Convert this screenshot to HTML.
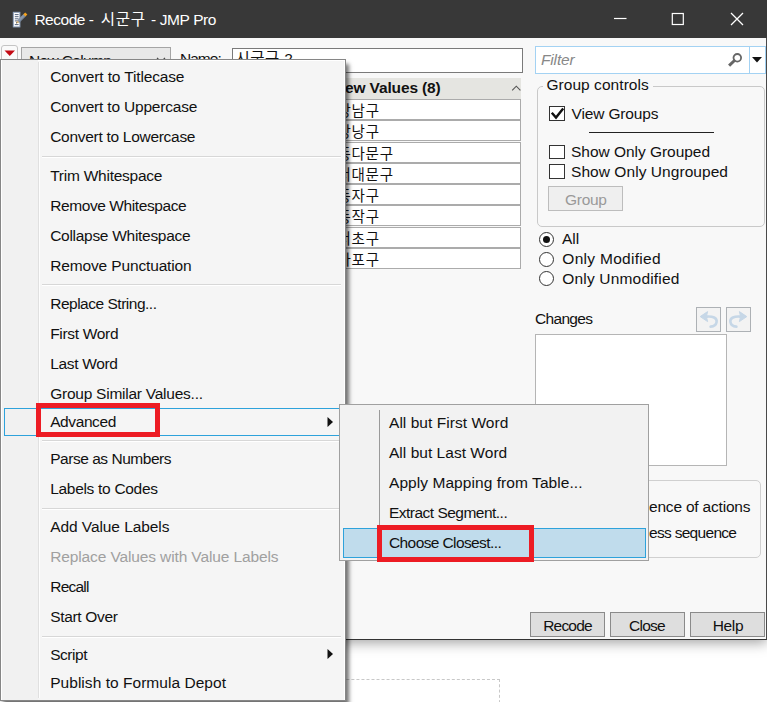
<!DOCTYPE html>
<html><head><meta charset="utf-8"><title>Recode</title>
<style>
html,body{margin:0;padding:0;}
body{width:767px;height:702px;position:relative;overflow:hidden;background:#fff;font-family:"Liberation Sans","Noto Sans CJK KR",sans-serif;color:#111;}
.a{position:absolute;box-sizing:border-box;}
.t{position:absolute;white-space:pre;line-height:24px;height:24px;}
.fld{position:absolute;box-sizing:border-box;background:#fff;border:1px solid #ababab;}
.btn{position:absolute;box-sizing:border-box;background:#dedede;border:1px solid #8a8a8a;}
.sep{position:absolute;height:2px;box-sizing:border-box;background:#fff;border-top:1px solid #d7d7d7;}
</style></head><body>
<!-- page background below the window -->
<div class="a" style="left:0;top:679px;width:500px;height:40px;border:1px dashed #c8c8c8;border-left:none;"></div>
<!-- window shadow -->
<div class="a" style="left:0;top:0;width:767px;height:640px;box-shadow:0 3px 12px rgba(0,0,0,.36);background:#f8f8f8;border-right:1px solid #4a4a4a;border-bottom:1px solid #333;"></div>
<!-- title bar -->
<div class="a" style="left:0;top:0;width:767px;height:38px;background:#383838;"></div>
<svg class="a" style="left:10px;top:8px" width="22" height="22" viewBox="10 8 22 22">
  <rect x="13.3" y="12.3" width="6.6" height="14.6" fill="#fff" stroke="#8fa3bf" stroke-width="1"/>
  <path d="M14.8 14.6h3.8M14.8 16.7h3.8M14.8 18.8h3.8M14.8 20.9h2.6M14.8 24.6h3.8" stroke="#56657e" stroke-width="1"/>
  <path d="M18 21.6 L24.6 15.2" stroke="#8796aa" stroke-width="3"/>
  <path d="M18.9 22.5 L25.4 16.2" stroke="#6d7c90" stroke-width="0.9"/>
  <path d="M24.4 15.4 L26.3 13.5" stroke="#f5a21c" stroke-width="3" />
  <path d="M16 23.4 L17 20.4 L19.4 22.6 Z" fill="#d9b577"/>
  <path d="M16 23.4 L16.5 22 L17.4 22.9 Z" fill="#333"/>
</svg>
<svg class="a" style="left:600px;top:0" width="167" height="38" viewBox="0 0 167 38">
  <path d="M14 18.5h12.5" stroke="#fff" stroke-width="1.2"/>
  <rect x="72.3" y="13.5" width="11" height="11" fill="none" stroke="#fff" stroke-width="1.2"/>
  <path d="M131 13l12 12M143 13l-12 12" stroke="#fff" stroke-width="1.3"/>
</svg>
<!-- red triangle button -->
<div class="a" style="left:1px;top:45px;width:17px;height:17px;border:1px solid #c4c4c4;border-radius:3px;background:#fafafa;"></div>
<svg class="a" style="left:3.5px;top:50px" width="12" height="7" viewBox="0 0 12 7"><path d="M0.5 0.5h10.5L5.75 6z" fill="#c30a14"/></svg>
<!-- New Column dropdown -->
<div class="a" style="left:21px;top:47px;width:150px;height:26px;border:1px solid #a5a5a5;background:#e8e8e8;"></div>
<svg class="a" style="left:156px;top:57px" width="10" height="6" viewBox="0 0 10 6"><path d="M1 0.8 L5 4.8 L9 0.8" fill="none" stroke="#444" stroke-width="1.2"/></svg>
<!-- Name field -->
<div class="fld" style="left:232px;top:48px;width:291px;height:25px;border-color:#7a7a7a;"></div>
<!-- New values header -->
<div class="a" style="left:333px;top:78px;width:188px;height:21px;background:#e5e5e1;"></div>
<svg class="a" style="left:509px;top:84px" width="12" height="8" viewBox="0 0 12 8"><path d="M3.2 6.4 L7.3 2.2 L11.4 6.4" fill="none" stroke="#555" stroke-width="1.1"/></svg>
<div class="fld" style="left:333px;top:99px;width:188px;height:21px;"></div>
<div class="fld" style="left:333px;top:120px;width:188px;height:21px;"></div>
<div class="fld" style="left:333px;top:142px;width:188px;height:21px;"></div>
<div class="fld" style="left:333px;top:163px;width:188px;height:21px;"></div>
<div class="fld" style="left:333px;top:184px;width:188px;height:21px;"></div>
<div class="fld" style="left:333px;top:205px;width:188px;height:21px;"></div>
<div class="fld" style="left:333px;top:227px;width:188px;height:21px;"></div>
<div class="fld" style="left:333px;top:248px;width:188px;height:21px;"></div>

<!-- Filter -->
<div class="a" style="left:535px;top:46px;width:231px;height:28px;border:1px solid #a3d2f3;background:#fff;"></div>
<div class="a" style="left:749px;top:47px;width:1px;height:26px;background:#a3d2f3;"></div>
<svg class="a" style="left:727px;top:52px" width="17" height="16" viewBox="0 0 17 16">
  <circle cx="10.3" cy="5.8" r="3.8" fill="none" stroke="#666" stroke-width="1.8"/>
  <path d="M7.5 8.5 L2.1 13.6" stroke="#666" stroke-width="3"/>
</svg>
<svg class="a" style="left:752px;top:57px" width="10" height="6" viewBox="0 0 10 6"><path d="M0 0h10L5 5.5z" fill="#111"/></svg>
<!-- group box -->
<div class="a" style="left:537px;top:86px;width:228px;height:141px;border:1px solid #c9c9c9;border-radius:5px;"></div>
<div class="a" style="left:543px;top:80px;width:110px;height:14px;background:#f8f8f8;"></div>
<!-- checkboxes -->
<div class="a" style="left:549px;top:106px;width:16px;height:15px;border:1px solid #333;background:#fff;"></div>
<svg class="a" style="left:549px;top:106px" width="16" height="15" viewBox="0 0 16 15"><path d="M2.8 6.8 L7 11.6 L14.2 2.6" fill="none" stroke="#111" stroke-width="2.4"/></svg>
<div class="a" style="left:589px;top:132px;width:125px;height:1px;background:#222;"></div>
<div class="a" style="left:549px;top:145px;width:16px;height:14px;border:1px solid #333;background:#fff;"></div>
<div class="a" style="left:549px;top:164px;width:16px;height:15px;border:1px solid #333;background:#fff;"></div>
<div class="a" style="left:548px;top:186px;width:75px;height:25px;border:1px solid #bdbdbd;background:#efefef;"></div>
<!-- radios -->
<div class="a" style="left:539px;top:232px;width:15px;height:15px;border:1px solid #333;border-radius:50%;background:#fff;"></div>
<div class="a" style="left:543px;top:236px;width:7px;height:7px;border-radius:50%;background:#111;"></div>
<div class="a" style="left:539px;top:252px;width:15px;height:15px;border:1px solid #333;border-radius:50%;background:#fff;"></div>
<div class="a" style="left:539px;top:271px;width:15px;height:15px;border:1px solid #333;border-radius:50%;background:#fff;"></div>
<!-- undo redo -->
<div class="a" style="left:696px;top:307px;width:25px;height:25px;border:1px solid #adb1b5;background:#f3f3f3;"></div>
<div class="a" style="left:726px;top:307px;width:25px;height:25px;border:1px solid #adb1b5;background:#f3f3f3;"></div>
<svg class="a" style="left:696px;top:307px" width="25" height="25" viewBox="0 0 25 25"><path d="M10.5 9.6 C16.5 9 21.3 10.8 20.6 15 C20.1 18 17.4 19.4 14.6 19.6" fill="none" stroke="#c6d7e7" stroke-width="2.6" stroke-linecap="round"/><path d="M4.2 9.6 L11.6 4.6 L10.4 9.6 L11.6 14.6 Z" fill="#c6d7e7" stroke="#c6d7e7" stroke-width="1" stroke-linejoin="round"/></svg>
<svg class="a" style="left:726px;top:307px" width="25" height="25" viewBox="0 0 25 25"><g transform="translate(25,0) scale(-1,1)"><path d="M10.5 9.6 C16.5 9 21.3 10.8 20.6 15 C20.1 18 17.4 19.4 14.6 19.6" fill="none" stroke="#c6d7e7" stroke-width="2.6" stroke-linecap="round"/><path d="M4.2 9.6 L11.6 4.6 L10.4 9.6 L11.6 14.6 Z" fill="#c6d7e7" stroke="#c6d7e7" stroke-width="1" stroke-linejoin="round"/></g></svg>
<!-- changes box -->
<div class="fld" style="left:535px;top:334px;width:192px;height:132px;border-color:#b5b5b5;"></div>
<!-- bottom group box -->
<div class="a" style="left:560px;top:480px;width:201px;height:78px;border:1px solid #d0d0d0;border-radius:5px;"></div>
<!-- buttons -->
<div class="btn" style="left:530px;top:612px;width:75px;height:25px;"></div>
<div class="btn" style="left:610px;top:612px;width:75px;height:25px;"></div>
<div class="btn" style="left:690px;top:612px;width:75px;height:25px;"></div>
<span class="t" style="left:34.4px;top:8px;font-size:15.5px;letter-spacing:-0.472px;color:#fff;">Recode - </span>
<span class="t" style="left:100.75px;top:8px;font-size:15.5px;letter-spacing:0.684px;color:#fff;">시군구 </span>
<span class="t" style="left:151px;top:8px;font-size:15.5px;letter-spacing:-0.391px;color:#fff;">- JMP Pro</span>
<span class="t" style="left:29px;top:49px;font-size:15.5px;letter-spacing:-0.637px;">New Column</span>
<span class="t" style="left:180px;top:47px;font-size:15.5px;letter-spacing:-0.989px;">Name:</span>
<span class="t" style="left:235.6px;top:47px;font-size:15.5px;letter-spacing:0.42px;">시군구 2</span>
<span class="t" style="left:334px;top:76px;font-size:15.5px;letter-spacing:-0.142px;font-weight:bold;">New Values (8)</span>
<span class="t" style="left:337.6px;top:99px;font-size:14.5px;letter-spacing:0.684px;">강남구</span>
<span class="t" style="left:337.6px;top:120px;font-size:14.5px;letter-spacing:0.684px;">강낭구</span>
<span class="t" style="left:337.6px;top:142px;font-size:14.5px;letter-spacing:0.675px;">동다문구</span>
<span class="t" style="left:337.6px;top:163px;font-size:14.5px;letter-spacing:0.675px;">서대문구</span>
<span class="t" style="left:337.6px;top:184px;font-size:14.5px;letter-spacing:0.684px;">동자구</span>
<span class="t" style="left:337.6px;top:205px;font-size:14.5px;letter-spacing:0.684px;">동작구</span>
<span class="t" style="left:337.6px;top:227px;font-size:14.5px;letter-spacing:0.684px;">서초구</span>
<span class="t" style="left:337.6px;top:248px;font-size:14.5px;letter-spacing:0.684px;">마포구</span>
<span class="t" style="left:541px;top:48px;font-size:15.5px;letter-spacing:-0.151px;font-style:italic;color:#888;">Filter</span>
<span class="t" style="left:546.4px;top:73px;font-size:15.5px;letter-spacing:0.056px;">Group controls</span>
<span class="t" style="left:571.5px;top:102px;font-size:15.5px;letter-spacing:-0.145px;">View Groups</span>
<span class="t" style="left:571px;top:140px;font-size:15.5px;letter-spacing:-0.036px;">Show Only Grouped</span>
<span class="t" style="left:571px;top:160px;font-size:15.5px;letter-spacing:0.057px;">Show Only Ungrouped</span>
<span class="t" style="left:565px;top:188px;font-size:15.5px;letter-spacing:-0.273px;color:#999;">Group</span>
<span class="t" style="left:562px;top:227px;font-size:15.5px;letter-spacing:-0.017px;">All</span>
<span class="t" style="left:562.3px;top:247px;font-size:15.5px;letter-spacing:0.295px;">Only Modified</span>
<span class="t" style="left:562.3px;top:267px;font-size:15.5px;letter-spacing:0.173px;">Only Unmodified</span>
<span class="t" style="left:535px;top:307px;font-size:15.5px;letter-spacing:-0.674px;">Changes</span>
<span class="t" style="left:649px;top:495px;font-size:15.5px;letter-spacing:-0.198px;">ence of actions</span>
<span class="t" style="left:649px;top:521px;font-size:15.5px;letter-spacing:-0.696px;">ess sequence</span>
<span class="t" style="left:543.2px;top:614px;font-size:15.5px;letter-spacing:-0.808px;">Recode</span>
<span class="t" style="left:629px;top:614px;font-size:15.5px;letter-spacing:-0.735px;">Close</span>
<span class="t" style="left:712.7px;top:614px;font-size:15.5px;letter-spacing:-0.33px;">Help</span>

<!-- ===== main menu ===== -->
<div class="a" style="left:0px;top:59px;width:346px;height:642px;background:#f5f5f5;border:1px solid #868686;box-shadow:3px 5px 4px rgba(0,0,0,.55), inset -1px 1px 0 #fff;"></div>
<div class="a" style="left:1px;top:60px;width:37px;height:640px;background:#f1f1f1;border-left:1px solid #fff;"></div>
<div class="a" style="left:38px;top:62px;width:1px;height:636px;background:#e0e0e0;"></div>
<div class="a" style="left:39px;top:62px;width:1px;height:636px;background:#fdfdfd;"></div>
<div class="sep" style="left:42px;top:156px;width:299px;"></div>
<div class="sep" style="left:42px;top:284px;width:299px;"></div>
<div class="sep" style="left:42px;top:440px;width:299px;"></div>
<div class="sep" style="left:42px;top:508px;width:299px;"></div>
<div class="sep" style="left:42px;top:636px;width:299px;"></div>
<!-- Advanced highlight -->
<div class="a" style="left:4px;top:408px;width:339px;height:28px;border:1px solid #2ea2db;background:transparent;"></div>
<svg class="a" style="left:327px;top:417px" width="7" height="10" viewBox="0 0 7 10"><path d="M0.5 0 L6 5 L0.5 10z" fill="#111"/></svg>
<svg class="a" style="left:327px;top:649px" width="7" height="10" viewBox="0 0 7 10"><path d="M0.5 0 L6 5 L0.5 10z" fill="#111"/></svg>
<span class="t" style="left:50.2px;top:65px;font-size:15.5px;letter-spacing:-0.141px;">Convert to Titlecase</span>
<span class="t" style="left:50.2px;top:95px;font-size:15.5px;letter-spacing:-0.183px;">Convert to Uppercase</span>
<span class="t" style="left:50.2px;top:125px;font-size:15.5px;letter-spacing:-0.288px;">Convert to Lowercase</span>
<span class="t" style="left:50.2px;top:164px;font-size:15.5px;letter-spacing:-0.243px;">Trim Whitespace</span>
<span class="t" style="left:50.2px;top:194px;font-size:15.5px;letter-spacing:-0.407px;">Remove Whitespace</span>
<span class="t" style="left:50.2px;top:224px;font-size:15.5px;letter-spacing:-0.289px;">Collapse Whitespace</span>
<span class="t" style="left:50.2px;top:254px;font-size:15.5px;letter-spacing:-0.141px;">Remove Punctuation</span>
<span class="t" style="left:50.2px;top:292px;font-size:15.5px;letter-spacing:-0.487px;">Replace String...</span>
<span class="t" style="left:50.2px;top:322px;font-size:15.5px;letter-spacing:-0.311px;">First Word</span>
<span class="t" style="left:50.2px;top:352px;font-size:15.5px;letter-spacing:-0.332px;">Last Word</span>
<span class="t" style="left:50.2px;top:382px;font-size:15.5px;letter-spacing:-0.246px;">Group Similar Values...</span>
<span class="t" style="left:50.2px;top:410px;font-size:15.5px;letter-spacing:-0.408px;">Advanced</span>
<span class="t" style="left:50.2px;top:447px;font-size:15.5px;letter-spacing:-0.471px;">Parse as Numbers</span>
<span class="t" style="left:50.2px;top:477px;font-size:15.5px;letter-spacing:-0.302px;">Labels to Codes</span>
<span class="t" style="left:50.2px;top:515px;font-size:15.5px;letter-spacing:-0.072px;">Add Value Labels</span>
<span class="t" style="left:50.2px;top:545px;font-size:15.5px;letter-spacing:-0.122px;color:#a0a0a0;">Replace Values with Value Labels</span>
<span class="t" style="left:50.2px;top:575px;font-size:15.5px;letter-spacing:-0.756px;">Recall</span>
<span class="t" style="left:50.2px;top:605px;font-size:15.5px;letter-spacing:-0.316px;">Start Over</span>
<span class="t" style="left:50.2px;top:643px;font-size:15.5px;letter-spacing:-0.465px;">Script</span>
<span class="t" style="left:50.2px;top:671px;font-size:15.5px;letter-spacing:0.04px;">Publish to Formula Depot</span>
<div class="a" style="left:36px;top:403px;width:124px;height:34px;border:5px solid #ed1c24;"></div>

<!-- ===== submenu ===== -->
<div class="a" style="left:339px;top:404px;width:310px;height:157px;background:#f2f2f2;border:1px solid #a0a0a0;"></div>
<div class="a" style="left:379px;top:410px;width:1px;height:116px;background:#9a9a9a;"></div>
<div class="a" style="left:343px;top:528px;width:303px;height:30px;border:1px solid #2ea2db;background:#c0dcec;"></div>
<span class="t" style="left:389px;top:411px;font-size:15.5px;letter-spacing:0.042px;">All but First Word</span>
<span class="t" style="left:389px;top:441px;font-size:15.5px;letter-spacing:0.028px;">All but Last Word</span>
<span class="t" style="left:389px;top:471px;font-size:15.5px;letter-spacing:0.064px;">Apply Mapping from Table...</span>
<span class="t" style="left:389px;top:501px;font-size:15.5px;letter-spacing:-0.518px;">Extract Segment...</span>
<span class="t" style="left:389px;top:531px;font-size:15.5px;letter-spacing:-0.603px;">Choose Closest...</span>
<div class="a" style="left:377px;top:525px;width:157px;height:37px;border:5px solid #ed1c24;"></div>
</body></html>
